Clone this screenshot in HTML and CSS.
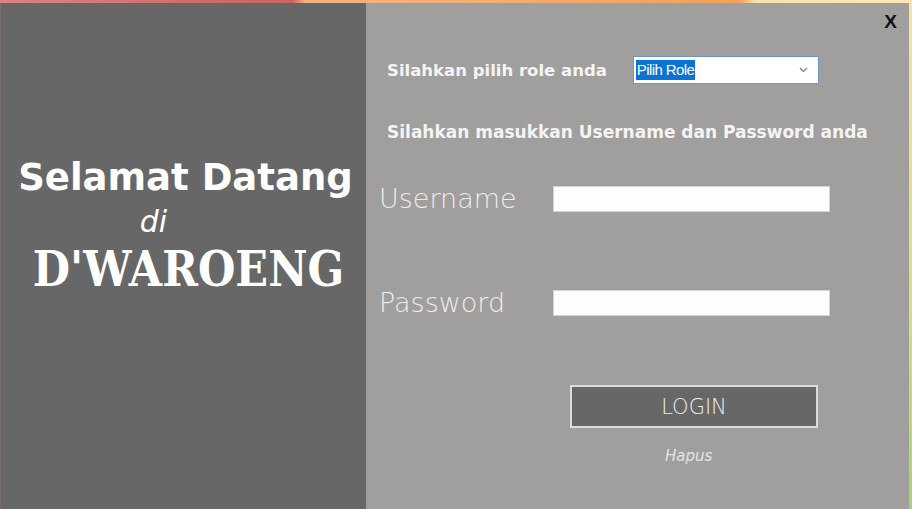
FILE: index.html
```html
<!DOCTYPE html>
<html lang="id">
<head>
<meta charset="utf-8">
<title>Login D'WAROENG</title>
<link rel="stylesheet" href="styles.css">
</head>
<body>
<div class="topstrip"></div>
<div class="window">
  <section class="welcome">
    <div class="w-title">Selamat Datang</div>
    <div class="w-di">di</div>
    <div class="w-brand">D'WAROENG</div>
  </section>
  <section class="form">
    <div class="close">X</div>
    <div class="role-row">
      <span class="label-bold">Silahkan pilih role anda</span>
      <div class="select">
        <span class="sel-text">Pilih Role</span>
        <svg class="chev" width="9" height="6" viewBox="0 0 9 6"><path d="M1 1 L4.5 4.5 L8 1" fill="none" stroke="#7a7a7a" stroke-width="1.2"/></svg>
      </div>
    </div>
    <div class="label-bold instr">Silahkan masukkan Username dan Password anda</div>
    <div class="field-row user">
      <span class="field-label">Username</span>
      <div class="input"></div>
    </div>
    <div class="field-row pass">
      <span class="field-label">Password</span>
      <div class="input"></div>
    </div>
    <div class="btn-row">
      <div class="btn">LOGIN</div>
    </div>
    <div class="hapus-row"><span class="hapus">Hapus</span></div>
  </section>
  <div class="edge"></div>
</div>
</body>
</html>
```
FILE: styles.css
```css
* { box-sizing: border-box; }
html, body { margin: 0; padding: 0; }
body {
  width: 912px;
  height: 509px;
  overflow: hidden;
  display: flex;
  flex-direction: column;
  font-family: "DejaVu Sans", sans-serif;
  background: #a09f9e;
}
.topstrip {
  height: 3px;
  flex: none;
  background: linear-gradient(90deg, #d98583 0%, #c9635d 32%, #f1b484 33.5%, #f0a35a 81%, #f8e4b0 83%, #f8e6b4 100%);
}
.window {
  flex: 1;
  display: flex;
}
.welcome {
  width: 366px;
  flex: none;
  background: #676767;
  display: flex;
  flex-direction: column;
  align-items: center;
  padding-top: 150px;
  border-left: 1px solid #7d6a6a;
}
.w-title {
  color: #fff;
  font-weight: bold;
  font-size: 37px;
  line-height: 50px;
  padding-left: 4px;
}
.w-di {
  color: #fff;
  font-style: italic;
  font-weight: 200;
  font-size: 30px;
  line-height: 34px;
  margin-right: 60px;
  margin-top: 2px;
}
.w-brand {
  color: #fff;
  font-family: "DejaVu Serif", serif;
  font-weight: bold;
  font-size: 43px;
  line-height: 52px;
  margin-top: 4px;
  padding-left: 10px;
  transform: scaleY(1.12);
}
.form {
  flex: 1;
  position: relative;
  background: #a09f9e;
  padding: 53px 0 0 0;
}
.close {
  position: absolute;
  top: 8px;
  right: 12px;
  font-family: "Liberation Sans", sans-serif;
  font-weight: bold;
  font-size: 19px;
  color: #111;
}
.role-row {
  display: flex;
  align-items: center;
  padding-left: 21px;
}
.label-bold {
  color: #f4f4f4;
  font-weight: bold;
  font-size: 16.5px;
}
.select {
  margin-left: 26px;
  width: 186px;
  height: 28px;
  background: #fff;
  border: 1px solid #6f95c9;
  display: flex;
  align-items: center;
  justify-content: space-between;
  padding: 0 10px 0 2px;
}
.sel-text {
  background: #0a74d6;
  color: #fff;
  font-family: "Liberation Sans", sans-serif;
  font-size: 15px;
  line-height: 20px;
  padding: 0 1px;
  letter-spacing: -0.6px;
}
.instr {
  margin-top: 38px;
  padding-left: 21px;
  font-size: 17px;
}
.field-row {
  display: flex;
  align-items: center;
  padding-left: 13px;
}
.user { margin-top: 40px; }
.pass { margin-top: 70px; }
.field-label {
  width: 174px;
  color: #ececec;
  font-weight: 200;
  font-size: 27px;
  line-height: 34px;
}
.input {
  width: 277px;
  height: 26px;
  background: #fdfdfd;
  border: 1px solid #d4d4d4;
}
.btn-row {
  display: flex;
  padding-left: 204px;
  margin-top: 65px;
}
.btn {
  width: 248px;
  height: 43px;
  background: #676767;
  border: 2px solid #dcdcdc;
  color: #ececec;
  font-size: 21px;
  font-weight: 200;
  display: flex;
  align-items: center;
  justify-content: center;
}
.hapus-row {
  padding-left: 299px;
  margin-top: 18px;
}
.hapus {
  color: #e4e4e4;
  font-style: italic;
  font-weight: 200;
  font-size: 15px;
}
.edge {
  width: 3px;
  flex: none;
  background: linear-gradient(180deg, #f4e2a8 0%, #d8dc90 60%, #a8d07a 100%);
}
```
